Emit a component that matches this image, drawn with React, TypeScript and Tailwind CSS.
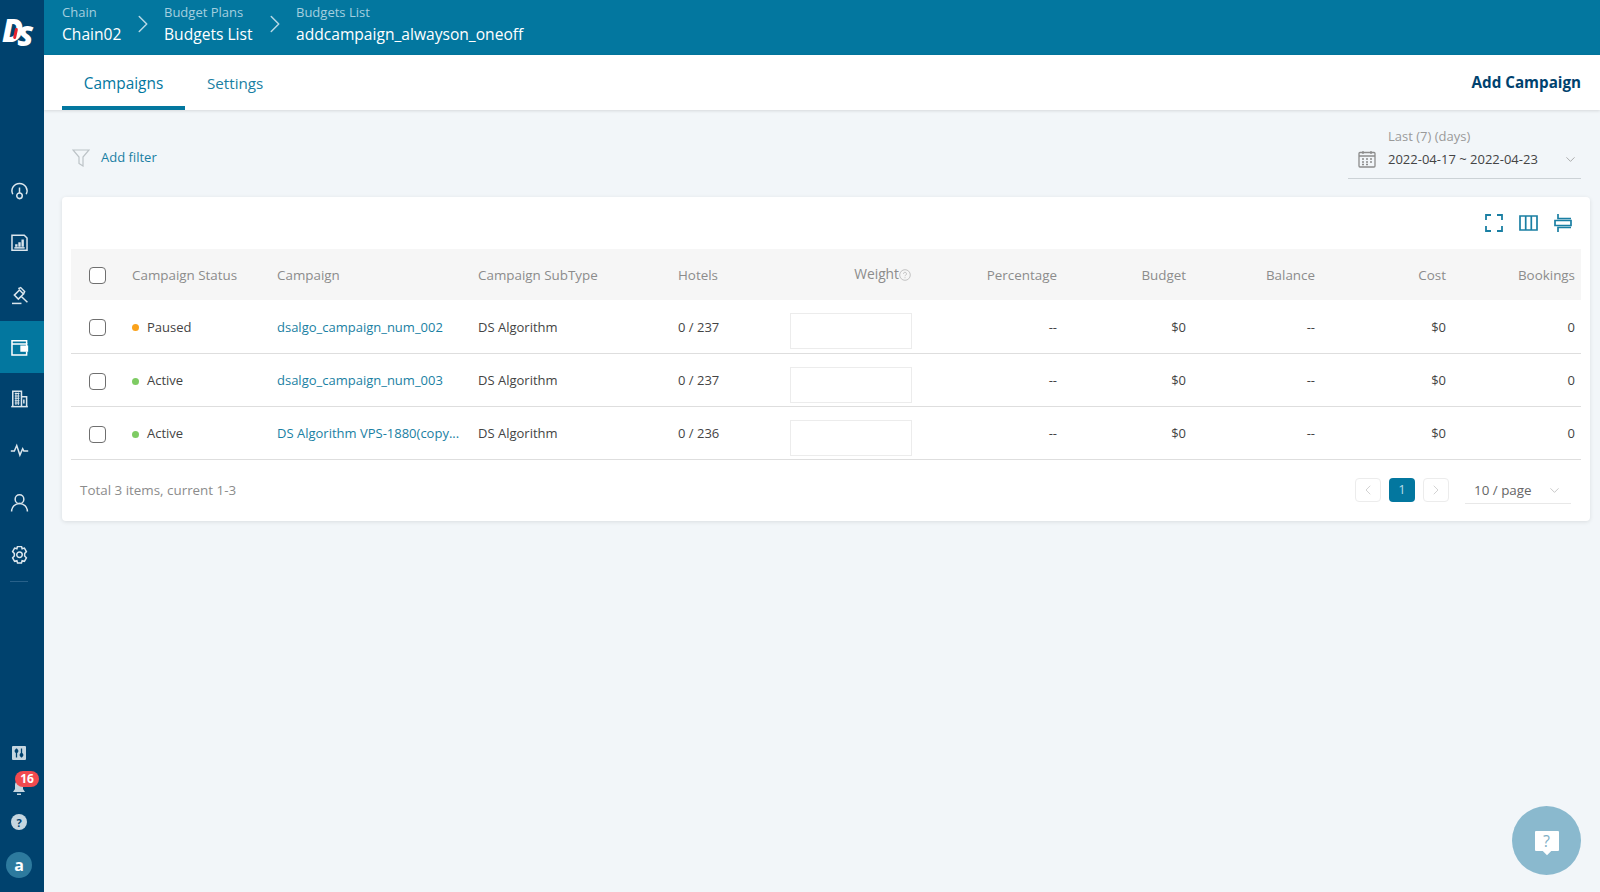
import React from 'react';
import { ChevronDown, ChevronLeft, ChevronRight } from 'lucide-react';

const navIcons: React.ReactNode[] = [
  <g key="gauge">
    <path d="M3.500 15.500a9.500 9.500 0 1 1 17 0" />
    <path d="M12 7v7" />
    <circle cx="12" cy="17.500" r="3.500" />
  </g>,
  <g key="report">
    <path d="M2.500 1.500h15.500l3.500 3.500v15.500h-19z" />
    <path d="M5.500 17.500h13" />
    <path d="M8 16v-3M12 16v-5.500M16 16V7" strokeWidth="3" />
  </g>,
  <g key="gavel">
    <path d="M2.500 22h12" />
    <path d="M5.500 11.500 12 5l5 5-6.500 6.500z" />
    <path d="M14 13l8 7.500" />
    <path d="M10.500 3.500l3-1.500 5 5-1.500 3" />
  </g>,
  <g key="wallet">
    <path d="M21 7.500V3.500H2.500v18H21V17" />
    <path d="M2.500 7.500H21V10" />
    <path d="M14 10.500h8v6h-8z" fill="currentColor" />
  </g>,
  <g key="building">
    <path d="M1.500 21h21" />
    <path d="M3.500 20.500V1.500h11v19" />
    <path d="M14.500 8.500h6.500v12" />
    <path d="M6 4.500h6M6 7.500h6M6 10.500h6M6 13.500h6M6 16.500h6M7.500 3v16M10.500 3v16" strokeWidth="1.300" />
    <path d="M17.500 12v5" />
  </g>,
  <g key="pulse">
    <path d="M1 11.500h4.500l3-7 4 12 3.500-8 1.500 3H23" />
  </g>,
  <g key="user">
    <circle cx="12" cy="6.500" r="5.500" />
    <path d="M2 22a10 10 0 0 1 20 0" />
  </g>,
  <g key="gear">
    <path d="M9.500 .5h5l.8 3 2.900-.8 2.500 4.300-2.200 2.500v3l2.200 2.500-2.500 4.300-2.900-.8-.8 3h-5l-.8-3-2.900.8-2.500-4.300 2.200-2.500v-3L3.300 7l2.500-4.300 2.900.8z" />
    <circle cx="12" cy="11" r="3.500" />
  </g>,
];

const rows = [
  { status: 'Paused', dot: 'bg-[#faa21b]', name: 'dsalgo_campaign_num_002', hotels: '0 / 237' },
  { status: 'Active', dot: 'bg-[#7ecb63]', name: 'dsalgo_campaign_num_003', hotels: '0 / 237' },
  { status: 'Active', dot: 'bg-[#7ecb63]', name: 'DS Algorithm VPS-1880(copy...', hotels: '0 / 236' },
];

const crumbs = [
  { label: 'Chain', value: 'Chain02', width: 'w-[102px]' },
  { label: 'Budget Plans', value: 'Budgets List', width: 'w-[132px]' },
];

const Checkbox = () => (
  <span className="block h-[17px] w-[17px] rounded-[4px] border-[1.5px] border-[#6f6f6f] bg-white" />
);

const App: React.FC = () => {
  return (
    <div
      className="flex h-[892px] w-[1600px] overflow-hidden bg-[#f2f6f9] text-[13px] text-[#444444]"
      style={{ fontFamily: '"Open Sans", "Noto Sans", sans-serif' }}
    >
      {/* Sidebar */}
      <aside className="flex w-[44px] shrink-0 flex-col bg-[#00426e] text-[#dbe6ed]">
        <div className="flex h-[165px] items-start pt-[11px] pl-[2px]">
          <span className="flex items-start font-black text-white italic">
            <span className="text-[31px] leading-[38px] tracking-[-6px]">D</span>
            <span className="relative top-[5px] text-[29px] leading-[38px]">S</span>
          </span>
          <span className="relative top-[17px] -ml-[19px] h-[11px] w-[3px] rotate-12 rounded-full bg-[#e5232e]" />
        </div>
        <nav>
          {navIcons.map((icon, i) => (
            <div key={i} className={`flex h-[52px] items-center justify-center pr-[6px] ${i === 3 ? 'bg-[#03779f] text-white' : ''}`}>
              <svg viewBox="0 0 24 24" className="h-[19px] w-[19px]" fill="none" stroke="currentColor" strokeWidth="1.900">
                {icon}
              </svg>
            </div>
          ))}
        </nav>
        <div className="mr-[16px] ml-[10px] h-px bg-[#28618a]" />
        <div className="mt-auto flex flex-col items-center pr-[6px] pb-[14px]">
          <div className="flex h-[14px] w-[14px] items-center justify-center rounded-[1px] bg-[#c5d6e0]">
            <svg viewBox="0 0 14 14" className="h-[14px] w-[14px]" fill="none" stroke="#00426e" strokeWidth="1.300">
              <path d="M4.500 2.500v9M9.500 2.500v9" />
              <circle cx="4.500" cy="5" r="1.300" fill="#00426e" />
              <circle cx="9.500" cy="9" r="1.300" fill="#00426e" />
            </svg>
          </div>
          <div className="relative mt-[20px] h-[16px] w-[14px]">
            <svg viewBox="0 0 14 16" className="h-[16px] w-[14px]" fill="#c5d6e0">
              <path d="M7 1a4 4 0 0 1 4 4v4l2 3H1l2-3V5a4 4 0 0 1 4-4z" />
              <rect x="5" y="13.500" width="4" height="1.500" />
            </svg>
            <span className="absolute -top-[9px] left-[3px] flex h-[16px] w-[24px] items-center justify-center rounded-full bg-[#f14a4f] text-[12px] leading-none font-bold text-white">
              16
            </span>
          </div>
          <div className="mt-[18px] flex h-[16px] w-[16px] items-center justify-center rounded-full bg-[#c5d6e0] text-[11px] leading-none font-bold text-[#00426e]">
            ?
          </div>
          <div className="mt-[22px] flex h-[26px] w-[26px] items-center justify-center rounded-full bg-[#2d7a9e] text-[16px] leading-none font-bold text-white">
            a
          </div>
        </div>
      </aside>

      <div className="flex min-w-0 flex-1 flex-col">
        {/* Breadcrumb header */}
        <header className="flex h-[55px] shrink-0 items-start bg-[#03779f] pt-[3px] pl-[18px] text-white">
          {crumbs.map(c => (
            <div key={c.label} className={`flex items-center ${c.width}`}>
              <div className="flex-1">
                <div className="text-[13px] leading-[18px] text-[#a5cfdf]">{c.label}</div>
                <div className="mt-[3px] text-[15.600px] leading-[20px] font-medium">{c.value}</div>
              </div>
              <ChevronRight className="mr-[6px] h-[30px] w-[30px] text-[#b6d8e5]" strokeWidth={1.200} />
            </div>
          ))}
          <div>
            <div className="text-[13px] leading-[18px] text-[#a5cfdf]">Budgets List</div>
            <div className="mt-[3px] text-[15.600px] leading-[20px] font-medium">addcampaign_alwayson_oneoff</div>
          </div>
        </header>

        {/* Tabs */}
        <div className="flex h-[55px] shrink-0 items-end justify-between bg-white pr-[19px] pl-[18px] shadow-[0_1px_3px_rgba(0,0,0,0.12)]">
          <div className="flex">
            <div className="h-[55px] w-[123px] border-b-[4px] border-[#03779f] pt-[18px] text-center text-[15.400px] leading-[21px] font-medium text-[#03779f]">
              Campaigns
            </div>
            <div className="pt-[18px] pl-[22px] text-[15.200px] leading-[21px] text-[#1a7fa3]">Settings</div>
          </div>
          <div className="self-start pt-[17px] text-[15.200px] leading-[21px] font-bold text-[#00426e]">Add Campaign</div>
        </div>

        {/* Filter row */}
        <div className="flex h-[87px] shrink-0 items-start justify-between pr-[19px] pl-[28px]">
          <div className="flex items-center pt-[38px]">
            <svg viewBox="0 0 18 18" className="h-[18px] w-[18px]" fill="none" stroke="#bcc3c7" strokeWidth="1.200">
              <path d="M1 1h16l-6 7v9l-4-2.500V8z" />
            </svg>
            <span className="ml-[11px] text-[13px] text-[#1a7fa3]">Add filter</span>
          </div>
          <div className="mt-[17px] h-[52px] w-[233px] border-b border-[#ccd2d6]">
            <div className="pl-[40px] text-[13px] leading-[18px] text-[#9a9a9a]">Last (7) (days)</div>
            <div className="mt-[5px] flex items-center pr-[3px] pl-[10px]">
              <svg viewBox="0 0 18 18" className="h-[18px] w-[18px]" fill="none" stroke="#8c8c8c" strokeWidth="1.300">
                <rect x="1" y="2.500" width="16" height="14.500" rx="1" />
                <path d="M1 6h16M5 1v3M13 1v3" />
                <path d="M4 9h2M8 9h2M12 9h2M4 12h2M8 12h2M12 12h2M4 14.500h2M8 14.500h2" />
              </svg>
              <span className="ml-[12px] flex-1 text-[13px] leading-[18px] text-[#444444]">2022-04-17 ~ 2022-04-23</span>
              <ChevronDown className="h-[15px] w-[15px] text-[#9a9a9a]" strokeWidth={1.300} />
            </div>
          </div>
        </div>

        {/* Table card */}
        <div className="ml-[18px] w-[1528px] rounded-[4px] bg-white px-[9px] shadow-[0_1px_4px_rgba(0,0,0,0.1)]">
          <div className="flex h-[52px] items-start justify-end gap-[15px] pt-[17px] pr-[9px] text-[#1a7fa3]">
            <svg viewBox="0 0 18 18" className="mr-[1px] h-[18px] w-[18px]" fill="none" stroke="currentColor" strokeWidth="1.800">
              <path d="M1 6V1h5M12 1h5v5M17 12v5h-5M6 17H1v-5" />
            </svg>
            <svg viewBox="0 0 19 18" className="mr-[1px] h-[18px] w-[19px]" fill="none" stroke="currentColor" strokeWidth="1.700">
              <path d="M1 2h17v14H1zM6.700 2v14M12.300 2v14" />
            </svg>
            <svg viewBox="0 0 18 18" className="h-[18px] w-[18px]" fill="none" stroke="currentColor" strokeWidth="1.700">
              <path d="M4 0v4.500h13M4 18v-4.500h13M1 6.500h16v5H1z" />
            </svg>
          </div>

          <table className="w-[1510px] table-fixed border-collapse">
            <colgroup>
              <col className="w-[47px]" />
              <col className="w-[145px]" />
              <col className="w-[201px]" />
              <col className="w-[200px]" />
              <col className="w-[112px]" />
              <col className="w-[149px]" />
              <col className="w-[146px]" />
              <col className="w-[129px]" />
              <col className="w-[129px]" />
              <col className="w-[131px]" />
              <col className="w-[121px]" />
            </colgroup>
            <thead>
              <tr className="h-[51px] bg-[#f6f6f6] text-left text-[13.400px] font-normal text-[#8c8c8c]">
                <th className="pt-[2px] pl-[18px] font-normal"><Checkbox /></th>
                <th className="px-[14px] pt-[2px] font-normal whitespace-nowrap">Campaign Status</th>
                <th className="px-[14px] pt-[2px] font-normal">Campaign</th>
                <th className="px-[14px] pt-[2px] font-normal">Campaign SubType</th>
                <th className="px-[14px] pt-[2px] font-normal">Hotels</th>
                <th className="px-[14px] text-right font-normal">
                  <span className="inline-flex items-center text-[13.800px]">
                    Weight
                    <svg viewBox="0 0 12 12" className="h-[12px] w-[12px]" fill="none" stroke="#b5b5b5" strokeWidth="0.800">
                      <circle cx="6" cy="6" r="5.300" />
                      <path d="M4.500 4.800a1.500 1.500 0 1 1 2.200 1.300c-.5.3-.7.6-.7 1.100M6 8.300v.9" />
                    </svg>
                  </span>
                </th>
                <th className="px-[14px] pt-[2px] text-right font-normal">Percentage</th>
                <th className="px-[14px] pt-[2px] text-right font-normal">Budget</th>
                <th className="px-[14px] pt-[2px] text-right font-normal">Balance</th>
                <th className="px-[14px] pt-[2px] text-right font-normal">Cost</th>
                <th className="pt-[2px] pr-[6px] text-right font-normal">Bookings</th>
              </tr>
            </thead>
            <tbody>
              {rows.map(r => (
                <tr key={r.name} className="h-[53px] border-b border-[#dedede] text-[13px] text-[#444444]">
                  <td className="pt-[3px] pl-[18px]"><Checkbox /></td>
                  <td className="px-[14px] pt-[3px]">
                    <span className="flex items-center">
                      <span className={`h-[7px] w-[7px] rounded-full ${r.dot}`} />
                      <span className="ml-[8px]">{r.status}</span>
                    </span>
                  </td>
                  <td className="px-[14px] pt-[3px] whitespace-nowrap text-[#1a7fa3]">{r.name}</td>
                  <td className="px-[14px] pt-[2px]">DS Algorithm</td>
                  <td className="px-[14px] pt-[2px]">{r.hotels}</td>
                  <td className="pt-[13px] pr-[15px] pl-[14px] align-top">
                    <div className="ml-auto h-[36px] w-[122px] border border-[#ececec] bg-white" />
                  </td>
                  <td className="px-[14px] pt-[2px] text-right">--</td>
                  <td className="px-[14px] pt-[2px] text-right">$0</td>
                  <td className="px-[14px] pt-[2px] text-right">--</td>
                  <td className="px-[14px] pt-[2px] text-right">$0</td>
                  <td className="pt-[2px] pr-[6px] text-right">0</td>
                </tr>
              ))}
            </tbody>
          </table>

          {/* Pagination */}
          <div className="flex h-[61px] items-start justify-between pt-[18px] pr-[10px] pl-[9px]">
            <span className="pt-[3px] text-[13.400px] leading-[18px] text-[#8c8c8c]">Total 3 items, current 1-3</span>
            <div className="flex items-start">
              <span className="flex h-[24px] w-[26px] items-center justify-center rounded-[4px] border border-[#ececec] text-[#c8c8c8]">
                <ChevronLeft className="h-[16px] w-[16px]" strokeWidth={1.200} />
              </span>
              <span className="ml-[8px] flex h-[24px] w-[26px] items-center justify-center rounded-[4px] bg-[#03779f] text-[13px] text-[#b7dbe8]">1</span>
              <span className="ml-[8px] flex h-[24px] w-[26px] items-center justify-center rounded-[4px] border border-[#ececec] text-[#c8c8c8]">
                <ChevronRight className="h-[16px] w-[16px]" strokeWidth={1.200} />
              </span>
              <div className="ml-[16px] flex h-[26px] w-[106px] items-center justify-between border-b border-[#e8e8e8] pr-[9px] pl-[9px] text-[13.400px] text-[#666666]">
                10 / page
                <ChevronDown className="h-[15px] w-[15px] text-[#b5b5b5]" strokeWidth={1.200} />
              </div>
            </div>
          </div>
        </div>
      </div>

      {/* Floating help button */}
      <div className="fixed right-[19px] bottom-[17px] flex h-[69px] w-[69px] items-center justify-center rounded-full bg-[#8ab9ce]">
        <div className="relative flex h-[20px] w-[24px] items-center justify-center rounded-[1px] bg-white text-[16px] leading-none text-[#7fb0c6]">
          ?
          <span className="absolute -bottom-[3px] left-[9px] h-[6px] w-[6px] rotate-45 bg-white" />
        </div>
      </div>
    </div>
  );
};

export default App;
